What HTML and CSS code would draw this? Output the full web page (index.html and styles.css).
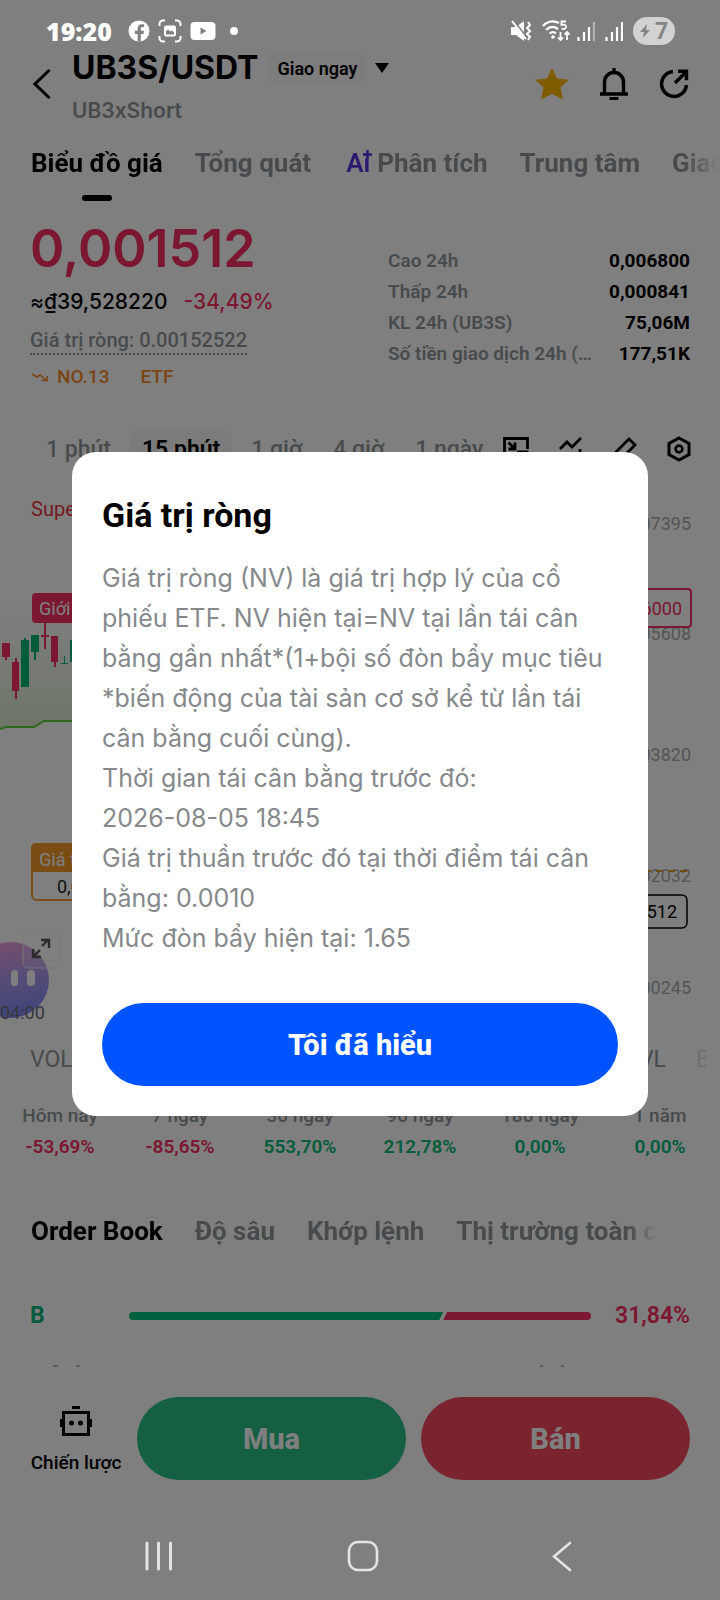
FILE: index.html
```html
<!DOCTYPE html>
<html lang="vi">
<head>
<meta charset="utf-8">
<meta name="viewport" content="width=device-width, initial-scale=1">
<title>UB3S/USDT</title>
<link rel="stylesheet" href="styles.css">
</head>
<body>
<div class="status">
  <div class="status-left">
    <span class="clock">19:20</span>
    <svg width="22" height="22" viewBox="0 0 22 22"><circle cx="11" cy="11" r="10.500" fill="#fff"/><path d="M9.600 21.500v-7.600H6.800v-3.200h2.800V8.600c0-3 1.700-4.400 4.200-4.400h2.300v2.900h-1.600c-1.300 0-1.700.7-1.700 1.800v1.800h3.200l-.5 3.200h-2.700v7.600z" fill="#808080"/></svg>
    <svg width="24" height="24" viewBox="0 0 24 24"><path d="M1.500 7V5a3.500 3.500 0 0 1 3.500-3.500h2M17 1.500h2A3.500 3.500 0 0 1 22.500 5v2M22.500 17v2a3.500 3.500 0 0 1-3.500 3.500h-2M7 22.500H5A3.500 3.500 0 0 1 1.500 19v-2" fill="none" stroke="#fff" stroke-width="2"/><rect x="6" y="6.500" width="12" height="11" rx="2" fill="#fff"/><path d="M8 15.500v-3l2-2 2 2 2-1 2 2v2z" fill="#808080"/></svg>
    <svg width="26" height="20" viewBox="0 0 26 20"><rect x="0.500" y="1" width="25" height="18" rx="4" fill="#fff"/><path d="M10.500 6.500v7l6-3.500z" fill="#808080"/></svg>
    <span class="dot"></span>
  </div>
  <div class="status-right">
    <svg width="22" height="22" viewBox="0 0 22 22"><path d="M1 7h5l8-6v20l-8-6H1z" fill="#fff"/><path d="M4 1l14 18" stroke="#808080" stroke-width="2"/><path d="M2 1l14 18M18 2l2 3-3 3 3 3-3 3 3 3-2 3" fill="none" stroke="#fff" stroke-width="2"/></svg>
    <svg class="wifi" width="29" height="22" viewBox="0 0 29 22"><path d="M1 6C5 1 12 0 17 3M4 10c4-4 8-4 12-1M7.500 13.500c2.500-2 4.500-2 6.500 0" fill="none" stroke="#fff" stroke-width="2.200"/><circle cx="11" cy="17" r="1.800" fill="#fff"/><path d="M24 1.500h-4.500V5c3-1 4.500 0 4.500 2s-2.500 2.500-4.500 1.500M18.500 12v8m-2.500-2.500l2.500 2.500 2.500-2.500M25 20v-8m-2.500 2.500L25 12l2.500 2.500" fill="none" stroke="#fff" stroke-width="1.800"/></svg>
    <svg width="18" height="20" viewBox="0 0 18 20" stroke="#fff" stroke-width="2.200"><path d="M1.500 16v4M7 11v9M12 6v14"/><path d="M17 1v19" opacity=".4"/></svg>
    <svg width="18" height="20" viewBox="0 0 18 20" stroke="#fff" stroke-width="2.200"><path d="M1.500 16v4M7 11v9M12 6v14M17 1v19"/></svg>
    <span class="battery"><svg width="10" height="16" viewBox="0 0 10 14"><path d="M7 0L0 8h4l-1 6 7-8H6z" fill="#858585"/></svg>7</span>
  </div>
</div>

<main class="screen">
  <header class="header">
    <button class="icon-btn back" aria-label="Quay lại"><svg width="18" height="30" viewBox="0 0 18 30"><path d="M16.500 1L2 15l14.500 14" fill="none" stroke="#000" stroke-width="3"/></svg></button>
    <div class="pair">
      <div class="pair-top"><h1>UB3S/USDT</h1><button class="market">Giao ngay</button><svg width="14" height="10" viewBox="0 0 14 10"><path d="M0 0h14L7 10z"/></svg></div>
      <p class="pair-sub">UB3xShort</p>
    </div>
    <div class="actions">
      <button class="icon-btn" aria-label="Yêu thích"><svg width="34" height="32" viewBox="0 0 34 32"><path d="M17 0l5 10.500 12 1.300-8.500 7.700L28 31.500l-11-5.500-11 5.500 2.500-12L0 11.800l12-1.300z" fill="#ffb700"/></svg></button>
      <button class="icon-btn" aria-label="Thông báo"><svg width="28" height="32" viewBox="0 0 28 32"><path d="M4.500 26V14a9.500 9.500 0 0 1 19 0v12M0 26h28M14 0v5" fill="none" stroke="#000" stroke-width="3.400"/><path d="M9.500 29h9v3h-9z"/></svg></button>
      <button class="icon-btn" aria-label="Chia sẻ"><svg width="30" height="30" viewBox="0 0 30 30"><path d="M14 2.500A12.500 12.500 0 1 0 27.500 16M16 14L27 3M19 2.200h8.500v9" fill="none" stroke="#000" stroke-width="3.400"/></svg></button>
    </div>
  </header>

  <nav class="tabs">
    <button class="tab active">Biểu đồ giá</button>
    <button class="tab">Tổng quát</button>
    <button class="tab"><span class="ai">Ai<svg class="spark" width="9" height="9" viewBox="0 0 9 9"><path d="M4.500 0v9M0 4.500h9" stroke="#3f35e0" stroke-width="2.400"/></svg></span>Phân tích</button>
    <button class="tab">Trung tâm</button>
    <button class="tab">Giao dịch</button>
  </nav>

  <section class="summary">
    <div class="price-col">
      <div class="price">0,001512</div>
      <div class="fiat"><span>≈₫39,528220</span><span class="down">-34,49%</span></div>
      <button class="nav-value">Giá trị ròng: 0.00152522</button>
      <div class="tags"><svg width="16" height="10" viewBox="0 0 16 10"><path d="M0 2l5 3 3-2 6 5M9.500 8.500H15V4" fill="none" stroke="#f58a2a" stroke-width="1.600"/></svg><span>NO.13</span><span class="tag-etf">ETF</span></div>
    </div>
    <dl class="stats">
      <div><dt>Cao 24h</dt><dd>0,006800</dd></div>
      <div><dt>Thấp 24h</dt><dd>0,000841</dd></div>
      <div><dt>KL 24h (UB3S)</dt><dd>75,06M</dd></div>
      <div><dt>Số tiền giao dịch 24h (USDT)</dt><dd>177,51K</dd></div>
    </dl>
  </section>

  <div class="intervals">
    <button>1 phút</button><button class="active">15 phút</button><button>1 giờ</button><button>4 giờ</button><button>1 ngày</button>
    <div class="tools">
      <svg width="26" height="24" viewBox="0 0 26 24"><path d="M1.500 22V1.500h23V12M14 15h10v7H1.500M5.500 5.500l6 6M12 5.500V12H5.500" fill="none" stroke="#000" stroke-width="2.800"/></svg>
      <svg width="24" height="24" viewBox="0 0 24 24"><path d="M1 12l7-7 5 5 9-9M2 23v-5M8 23v-8M14 23v-6M21 23V12" fill="none" stroke="#000" stroke-width="2.800"/></svg>
      <svg width="24" height="24" viewBox="0 0 24 24"><path d="M2 16L16 2l6 6L8 22H2z" fill="none" stroke="#000" stroke-width="2.800"/></svg>
      <svg width="24" height="26" viewBox="0 0 24 26"><path d="M12 2l10 5.500v11L12 24 2 18.500v-11z" fill="none" stroke="#000" stroke-width="3"/><circle cx="12" cy="13" r="3.400" fill="none" stroke="#000" stroke-width="2.600"/></svg>
    </div>
  </div>

  <svg class="chart" viewBox="0 0 720 564" role="img" aria-label="Biểu đồ nến">
    <defs>
      <linearGradient id="robot" x1="0" y1="0" x2="0.200" y2="1"><stop offset="0" stop-color="#f58ad0"/><stop offset="0.500" stop-color="#a688e8"/><stop offset="1" stop-color="#7078f0"/></linearGradient>
      <linearGradient id="band" x1="0" y1="0" x2="0" y2="1"><stop offset="0" stop-color="#bfdcae" stop-opacity="0"/><stop offset="1" stop-color="#bfdcae" stop-opacity=".55"/></linearGradient>
    </defs>
    <path d="M0 123h400v129H45l-10 6H0z" fill="url(#band)"/>
    <path d="M0 259l6-2h28l10-6h300" fill="none" stroke="#5ad03c" stroke-width="2"/>
    <text x="31" y="46" class="c-ind">SuperTrend</text>
    <g fill="#f82e62"><path d="M2 173h8v14H2zM12 192h7v29h-7zM51 166h7v26h-7zM5 186h2v4H5zM15 188h2v41h-2zM54 190h2v7h-2zM41 165h8v2h-8zM44 150h2v29h-2z"/></g>
    <g fill="#04b878"><path d="M21 170h8v47h-8zM31 165h8v17h-8zM24 168h2v3h-2zM34 181h2v9h-2zM61 193h7v1h-7zM64 186h1v8h-1zM70 170h8v22h-8z"/></g>
    <rect x="32" y="123" width="140" height="30" rx="4" fill="#f82e62"/>
    <text x="39" y="145" class="c-box">Giới hạn</text>
    <g class="c-axis"><text x="691" y="60">0.007395</text><text x="691" y="170">0.005608</text><text x="691" y="291">0.003820</text><text x="691" y="412">0.002032</text><text x="691" y="524">0.000245</text></g>
    <path d="M560 401h130" stroke="#d99a2c" stroke-width="2" stroke-dasharray="7 5"/>
    <rect x="580" y="119" width="111" height="38" rx="3" fill="#fff" stroke="#f82e62" stroke-width="2"/>
    <text x="682" y="145" class="c-limit">0.006000</text>
    <rect x="580" y="425" width="107" height="33" rx="5" fill="#fff" stroke="#000" stroke-width="1.500"/>
    <text x="677" y="448" class="c-last">0.001512</text>
    <rect x="32" y="374" width="140" height="56" rx="5" fill="#fff" stroke="#f59a2a" stroke-width="2"/>
    <path d="M31 402v-24a5 5 0 0 1 5-5h130v29z" fill="#f59a2a"/>
    <text x="39" y="396" class="c-box">Giá trị ròng</text>
    <text x="57" y="423" class="c-nv">0,001525</text>
    <circle cx="11" cy="510" r="38" fill="url(#robot)" opacity=".85"/>
    <rect x="11" y="500" width="7" height="16" rx="3.500" fill="#fff"/><rect x="27" y="500" width="8" height="16" rx="4" fill="#fff"/>
    <rect x="23" y="460" width="36" height="38" rx="5" fill="#fff" fill-opacity=".15" stroke="#f0f0f0"/>
    <path d="M42 476l6-6M41 470h8v8M40 480l-6 6M33 479v8h8" fill="none" stroke="#555" stroke-width="2.400"/>
    <text x="0" y="549" class="c-time">04:00</text>
  </svg>

  <div class="indicators"><span>VOL</span><span class="ind-right">AVL</span><span class="ind-fade">EMA</span></div>

  <dl class="perf">
    <div><dt>Hôm nay</dt><dd class="down">-53,69%</dd></div>
    <div><dt>7 ngày</dt><dd class="down">-85,65%</dd></div>
    <div><dt>30 ngày</dt><dd class="up">553,70%</dd></div>
    <div><dt>90 ngày</dt><dd class="up">212,78%</dd></div>
    <div><dt>180 ngày</dt><dd class="up">0,00%</dd></div>
    <div><dt>1 năm</dt><dd class="up">0,00%</dd></div>
  </dl>

  <nav class="book-tabs">
    <button class="active">Order Book</button><button>Độ sâu</button><button>Khớp lệnh</button><button>Thị trường toàn cầu</button>
  </nav>

  <div class="ratio">
    <span class="ratio-b up">B</span>
    <div class="ratio-bar"><span class="bar-buy" style="flex-grow:68"></span><span class="bar-sell" style="flex-grow:32"></span></div>
    <span class="ratio-s down">31,84%</span>
  </div>
  <svg class="peek" viewBox="0 0 720 2" aria-hidden="true"><path d="M53 1h5M76 1h4M540 1h3M561 1h3" stroke="#777" stroke-width="1"/></svg>

  <footer class="trade">
    <button class="strategy"><svg width="32" height="31" viewBox="0 0 32 31"><path d="M3.500 6.500h25v22h-25z" fill="none" stroke="#000" stroke-width="3"/><path d="M12 0h8v3h-8zM0 13h3v8H0zM29 13h3v8h-3z"/><circle cx="11.500" cy="17" r="2.500"/><circle cx="20.500" cy="17" r="2.500"/></svg><span>Chiến lược</span></button>
    <button class="buy">Mua</button>
    <button class="sell">Bán</button>
  </footer>
</main>

<div class="scrim">
  <div class="dialog" role="dialog" aria-modal="true" aria-labelledby="dlg-title">
    <h2 id="dlg-title">Giá trị ròng</h2>
    <p>Giá trị ròng (NV) là giá trị hợp lý của cổ<br>phiếu ETF. NV hiện tại=NV tại lần tái cân<br>bằng gần nhất*(1+bội số đòn bẩy mục tiêu<br>*biến động của tài sản cơ sở kể từ lần tái<br>cân bằng cuối cùng).</p>
    <p>Thời gian tái cân bằng trước đó:<br>2026-08-05 18:45</p>
    <p>Giá trị thuần trước đó tại thời điểm tái cân<br>bằng: 0.0010</p>
    <p>Mức đòn bẩy hiện tại: 1.65</p>
    <button class="ok">Tôi đã hiểu</button>
  </div>
</div>

<div class="sysnav">
  <button class="icon-btn" aria-label="Gần đây"><svg width="28" height="30" viewBox="0 0 28 30"><path d="M2 2v26M13.500 2v26M25.500 2v26" stroke="#e4e4e4" stroke-width="3" stroke-linecap="round"/></svg></button>
  <button class="icon-btn" aria-label="Trang chủ"><svg width="32" height="32" viewBox="0 0 32 32"><rect x="2" y="2" width="28" height="28" rx="9" fill="none" stroke="#e4e4e4" stroke-width="2.600"/></svg></button>
  <button class="icon-btn" aria-label="Trở về"><svg width="20" height="31" viewBox="0 0 20 31"><path d="M18 2L2 15.500 18 29" fill="none" stroke="#e4e4e4" stroke-width="2.600" stroke-linecap="round"/></svg></button>
</div>
</body>
</html>
```

FILE: styles.css
```css
* { box-sizing: border-box; }

body {
  margin: 0;
  position: relative;
  min-height: 100vh;
  background: #fff;
  color: #000;
  font-family: Roboto, "Liberation Sans", sans-serif;
  overflow-x: hidden;
}

h1, h2, p, dl, dd { margin: 0; }
svg { display: block; flex: none; }

button {
  margin: 0;
  padding: 0;
  border: 0;
  background: none;
  font: inherit;
  color: inherit;
  white-space: nowrap;
}

.down { color: #f82e62; }
.up { color: #04b878; }

/* System status bar */
.status {
  position: relative;
  z-index: 3;
  display: flex;
  justify-content: space-between;
  height: 48px;
  padding: 14px 45px 0 46px;
  color: #fff;
}
.status-left, .status-right { display: flex; align-items: center; height: 34px; }
.status-left { gap: 8px; }
.status-right { gap: 10px; }
.wifi { margin-right: -4px; }
.clock { font: 800 25px/34px "Open Sans", sans-serif; margin-right: 8px; }
.dot { width: 8px; height: 8px; margin-left: 6px; border-radius: 50%; background: #fff; }
.battery {
  display: flex;
  align-items: center;
  gap: 5px;
  width: 42px;
  height: 28px;
  padding-left: 7px;
  border-radius: 14px;
  background: #d2d2d2;
  color: #858585;
  font-size: 23px;
  font-weight: 700;
}

/* Pair header */
.header { display: flex; align-items: center; height: 78px; padding: 0 31px 0 33px; }
.back { margin-right: 21px; padding-bottom: 6px; }
.pair { flex: 1; }
.pair-top { display: flex; align-items: center; }
.pair h1 { font: 700 32px/40px Inter, sans-serif; }
.market {
  height: 30px;
  margin: 0 8px 0 10px;
  padding: 0 9px;
  border-radius: 4px;
  background: #fafafa;
  font-size: 18px;
  font-weight: 600;
}
.pair-sub { margin-top: 8px; color: #91979a; font: 600 21px/30px Inter, sans-serif; }
.actions { display: flex; align-items: center; gap: 31px; padding-bottom: 6px; }

/* Section tabs */
.tabs { display: flex; gap: 32px; margin-top: 22px; padding-left: 31px; overflow: hidden;
  -webkit-mask-image: linear-gradient(to left, transparent, #000 36px);
  mask-image: linear-gradient(to left, transparent, #000 36px); }
.tab { position: relative; flex: none; height: 53px; padding-bottom: 23px; color: #91979a; font-size: 26px; font-weight: 700; line-height: 30px; }
.tab.active { color: #000; }
.tab.active::after { content: ""; position: absolute; left: 50%; bottom: 0; width: 30px; height: 6px; margin-left: -15px; border-radius: 3px; background: #000; }
.ai { position: relative; margin: 0 7px 0 3px; color: #5b35e0; font-weight: 600; }
.spark { position: absolute; top: 2px; right: -2px; }

/* Price summary */
.summary { display: grid; grid-template-columns: 358px minmax(0, 1fr); margin-top: 20px; padding: 0 30px; }
.price { color: #f82e62; font: 600 52px/56px Inter, sans-serif; }
.fiat { display: flex; gap: 16px; margin-top: 10px; font: 500 21px/30px Inter, sans-serif; }
.nav-value { display: block; margin-top: 10px; border-bottom: 2px dotted #91979a; color: #91979a; font-size: 20px; font-weight: 500; line-height: 26px; }
.tags { display: flex; align-items: center; margin-top: 8px; padding-left: 2px; gap: 9px; color: #f58a2a; font-size: 19px; font-weight: 500; line-height: 28px; }
.tag-etf { margin-left: 22px; }
.stats { padding-top: 24px; font-size: 19px; line-height: 31px; }
.stats div { display: flex; justify-content: space-between; gap: 20px; }
.stats dt { min-width: 0; overflow: hidden; color: #91979a; font-weight: 600; text-overflow: ellipsis; white-space: nowrap; }
.stats dd { font-weight: 700; }

/* Chart intervals */
.intervals { display: flex; height: 42px; margin-top: 37px; padding: 0 29px 0 34px; color: #91979a; font-size: 23px; font-weight: 500; }
.intervals button { padding: 0 12px; margin-right: 7px; border-radius: 12px; }
.intervals .active { background: #f6f6f6; color: #000; font-weight: 600; }
.tools { display: flex; flex: 1; align-items: center; justify-content: flex-end; gap: 30px; }

.chart { width: 100%; height: auto; font-family: Roboto, sans-serif; font-size: 18px; }
.c-ind { fill: #e8323c; font-size: 20px; }
.c-box { fill: #fff; }
.c-axis { fill: #a8acae; text-anchor: end; }
.c-limit { fill: #f82e62; text-anchor: end; }
.c-last { fill: #000; text-anchor: end; }
.c-nv { fill: #222; }
.c-time { fill: #6d7080; }

.indicators { display: flex; align-items: center; height: 50px; padding: 0 14px 0 30px; color: #91979a; font-size: 23px; }
.ind-right { margin-left: auto; }
.ind-fade { width: 10px; margin-left: 30px; overflow: hidden; opacity: .3; }

/* Performance by period */
.perf { display: grid; grid-template-columns: repeat(6, 1fr); margin-top: 16px; text-align: center; font-size: 19px; font-weight: 500; line-height: 31px; }
.perf dt { color: #91979a; }
.perf dd { font-weight: 600; }

/* Order book */
.book-tabs { display: flex; gap: 32px; margin: 52px 62px 0 31px; overflow: hidden; color: #91979a; font-size: 26px; font-weight: 700; line-height: 34px;
  -webkit-mask-image: linear-gradient(to left, transparent, #000 30px);
  mask-image: linear-gradient(to left, transparent, #000 30px); }
.book-tabs .active { color: #000; }
.ratio { display: flex; align-items: center; margin-top: 53px; padding: 0 30px; font-size: 23px; font-weight: 600; line-height: 30px; }
.ratio-b { width: 99px; font-weight: 700; }
.ratio-bar { display: flex; flex: 1; height: 8px; margin-right: 24px; }
.bar-buy { border-radius: 4px 0 0 4px; background: #04c07e; clip-path: polygon(0 0, 100% 0, calc(100% - 4px) 100%, 0 100%); }
.bar-sell { border-radius: 0 4px 4px 0; background: #f82e62; clip-path: polygon(4px 0, 100% 0, 100% 100%, 0 100%); }
.peek { width: 100%; height: auto; margin-top: 34px; }

/* Trade actions */
.trade { display: flex; gap: 15px; margin-top: 30px; padding: 0 30px; }
.strategy { display: flex; flex-direction: column; align-items: center; gap: 14px; width: 92px; padding-top: 9px; font-size: 19px; font-weight: 500; line-height: 24px; }
.buy, .sell { flex: 1; height: 83px; border-radius: 42px; color: #fff; font-size: 29px; font-weight: 800; }
.buy { background: #2abf84; }
.sell { background: #f44860; }

/* Dialog */
.scrim {
  position: absolute;
  inset: 0;
  z-index: 2;
  display: flex;
  align-items: center;
  justify-content: center;
  padding: 0 72px 32px;
  background: rgba(0, 0, 0, .5);
}
.dialog { width: 100%; padding: 43px 30px 30px; border-radius: 24px; background: #fff; }
.dialog h2 { margin-bottom: 23px; font-size: 34px; font-weight: 700; line-height: 40px; }
.dialog p { color: #85898b; font: 400 25px/40px Inter, sans-serif; white-space: nowrap; }
.ok { display: block; width: 100%; height: 83px; margin-top: 45px; border-radius: 42px; background: #0054ff; color: #fff; font-size: 29px; font-weight: 800; }

/* System navigation */
.sysnav { position: relative; z-index: 3; display: grid; grid-template-columns: 28px 1fr 20px; align-items: center; justify-items: center; height: 120px; padding: 32px 148px 0 145px; }
```
